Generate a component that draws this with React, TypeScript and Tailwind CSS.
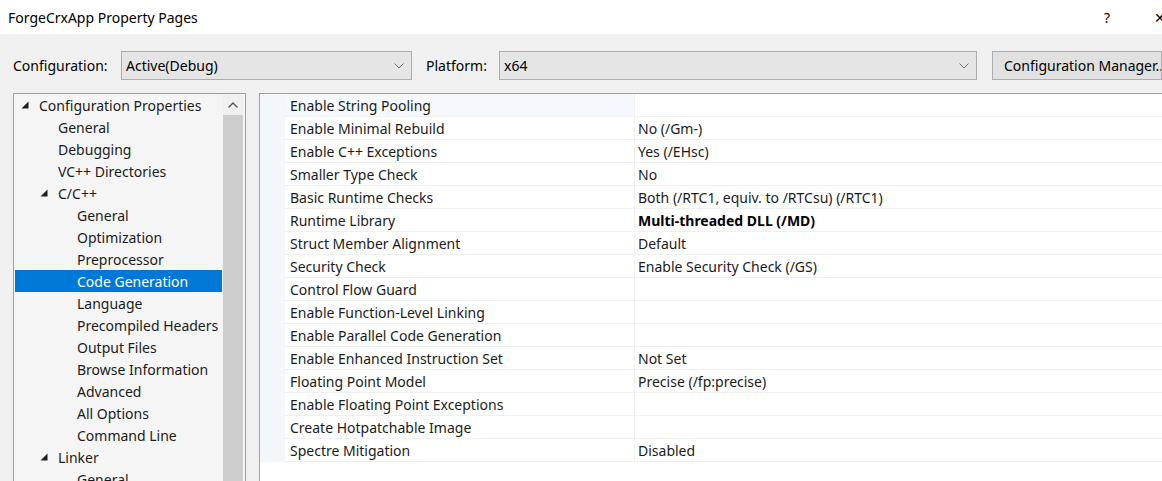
import React from "react";

const font = { fontFamily: '"Noto Sans", "Open Sans", sans-serif' };

type TreeItem = { label: string; level: number; open?: boolean; selected?: boolean };

const tree: TreeItem[] = [
  { label: "Configuration Properties", level: 0, open: true },
  { label: "General", level: 1 },
  { label: "Debugging", level: 1 },
  { label: "VC++ Directories", level: 1 },
  { label: "C/C++", level: 1, open: true },
  { label: "General", level: 2 },
  { label: "Optimization", level: 2 },
  { label: "Preprocessor", level: 2 },
  { label: "Code Generation", level: 2, selected: true },
  { label: "Language", level: 2 },
  { label: "Precompiled Headers", level: 2 },
  { label: "Output Files", level: 2 },
  { label: "Browse Information", level: 2 },
  { label: "Advanced", level: 2 },
  { label: "All Options", level: 2 },
  { label: "Command Line", level: 2 },
  { label: "Linker", level: 1, open: true },
  { label: "General", level: 2 },
];

const props: { name: string; value: string; bold?: boolean }[] = [
  { name: "Enable String Pooling", value: "" },
  { name: "Enable Minimal Rebuild", value: "No (/Gm-)" },
  { name: "Enable C++ Exceptions", value: "Yes (/EHsc)" },
  { name: "Smaller Type Check", value: "No" },
  { name: "Basic Runtime Checks", value: "Both (/RTC1, equiv. to /RTCsu) (/RTC1)" },
  { name: "Runtime Library", value: "Multi-threaded DLL (/MD)", bold: true },
  { name: "Struct Member Alignment", value: "Default" },
  { name: "Security Check", value: "Enable Security Check (/GS)" },
  { name: "Control Flow Guard", value: "" },
  { name: "Enable Function-Level Linking", value: "" },
  { name: "Enable Parallel Code Generation", value: "" },
  { name: "Enable Enhanced Instruction Set", value: "Not Set" },
  { name: "Floating Point Model", value: "Precise (/fp:precise)" },
  { name: "Enable Floating Point Exceptions", value: "" },
  { name: "Create Hotpatchable Image", value: "" },
  { name: "Spectre Mitigation", value: "Disabled" },
];

function Chevron({ up }: { up?: boolean }) {
  return (
    <svg width="10" height="6" viewBox="0 0 10 6" className={up ? "rotate-180" : ""}>
      <path d="M0.5 0.5 L5 5 L9.5 0.5" fill="none" stroke={up ? "#555" : "#707070"} strokeWidth={up ? 1.4 : 1} />
    </svg>
  );
}

function Tri() {
  return (
    <svg width="8" height="8" viewBox="0 0 8 8">
      <polygon points="7.5,0.5 7.5,7.5 0.5,7.5" fill="#1e1e1e" />
    </svg>
  );
}

function Combo({ text, width }: { text: string; width: string }) {
  return (
    <div className={`${width} h-[29px] flex items-center justify-between border border-[#adadad] bg-[#e5e5e5] pl-[4px] pr-[7px]`}>
      <span className="text-[14px] text-black">{text}</span>
      <Chevron />
    </div>
  );
}

export default function App() {
  return (
    <div className="w-[1162px] h-[481px] overflow-hidden bg-[#f0f0f0] text-[#1b1b1b]" style={font}>
      <div className="h-[34px] bg-white flex items-center pl-[8px] pr-0">
        <span className="text-[14px] text-black flex-1">ForgeCrxApp Property Pages</span>
        <span className="text-[14px] text-black w-[50px]">?</span>
        <span className="text-[14px] text-black w-[8px] overflow-hidden">✕</span>
      </div>

      <div className="flex items-center pt-[17px] pl-[13px] h-[46px]">
        <span className="text-[14px] text-black w-[108px]">Configuration:</span>
        <Combo text="Active(Debug)" width="w-[291px]" />
        <span className="text-[14px] text-black ml-[14px] w-[73px]">Platform:</span>
        <Combo text="x64" width="w-[478px]" />
        <div className="ml-[15px] h-[29px] flex-1 flex items-center border border-[#adadad] bg-[#e1e1e1] pl-[11px] whitespace-nowrap overflow-hidden">
          <span className="text-[14px] text-black">Configuration Manager...</span>
        </div>
      </div>

      <div className="flex mt-[13px] pl-[13px] h-[400px]">
        <div className="w-[233px] h-full border border-[#a0a0a0] border-b-0 bg-[#f5f5f5] flex">
          <div className="w-[208px] pl-[1px]">
            {tree.map((t, i) => (
              <div
                key={i}
                className={`h-[22px] flex items-center whitespace-nowrap ${t.selected ? "bg-[#0078d7] text-white" : "text-[#1b1b1b]"}`}
              >
                <div className={t.level === 0 ? "w-[6px]" : t.level === 1 ? "w-[25px]" : "w-[44px]"} />
                <div className="w-[18px] flex items-center">{t.open && t.level < 2 ? <Tri /> : null}</div>
                <span className="text-[14px]">{t.label}</span>
              </div>
            ))}
          </div>
          <div className="w-[20px] ml-[1px] flex flex-col bg-[#f0f0f0]">
            <div className="h-[21px] flex items-center justify-center">
              <Chevron up />
            </div>
            <div className="flex-1 bg-[#cdcdcd]" />
          </div>
        </div>

        <div className="ml-[13px] flex-1 h-full border-t border-l border-[#a0a0a0] bg-white">
          {props.map((p, i) => (
            <div key={i} className="h-[23px] flex">
              <div className="w-[25px] bg-[#f3f6fb]" />
              <div
                className={`w-[349px] flex items-center pl-[5px] border-b border-[#f0f0f0] ${i === 0 ? "bg-[#f5f8fc]" : ""}`}
              >
                <span className="text-[14px] text-[#1b1b1b] whitespace-nowrap">{p.name}</span>
              </div>
              <div className="flex-1 flex items-center pl-[3px] border-l border-b border-[#f0f0f0]">
                <span className={`text-[14px] whitespace-nowrap ${p.bold ? "font-bold text-black" : "text-[#1b1b1b]"}`}>
                  {p.value}
                </span>
              </div>
            </div>
          ))}
        </div>
      </div>
    </div>
  );
}
